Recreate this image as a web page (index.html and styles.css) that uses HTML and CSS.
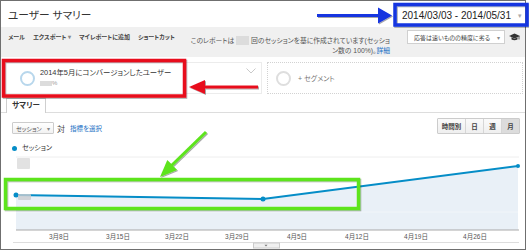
FILE: index.html
```html
<!DOCTYPE html>
<html lang="ja">
<head>
  <meta charset="UTF-8">
  <title>ユーザー サマリー</title>
  <link rel="stylesheet" href="styles.css">
</head>
<body>

  <div class="frame">
    <!-- title + date range -->
    <div class="header">
      <h1 class="title">ユーザー サマリー</h1>
      <div class="daterange"><span>2014/03/03 - 2014/05/31</span><span class="caret">▾</span></div>
    </div>

    <!-- report toolbar -->
    <div class="toolbar">
      <div class="tools">
        <span>メール</span>
        <span>エクスポート <i class="tri">▾</i></span>
        <span>マイレポートに追加</span>
        <span>ショートカット</span>
      </div>
      <p class="note">このレポートは <span class="blur"></span> 回のセッションを基に作成されています(セッショ<br>ン数の 100%)。<a class="link">詳細</a></p>
      <div class="quality"><span>応答は速いものの精度に劣る</span><span class="tri">▾</span></div>
      <svg class="cap" width="11" height="8" viewBox="0 0 11 8">
        <polygon points="0,3 5.5,0.5 11,3 5.5,5.5" fill="#333"/>
        <path d="M2.5 4.2 V6.4 Q5.5 8 8.5 6.4 V4.2 L5.5 5.7 Z" fill="#333"/>
        <line x1="10" y1="3" x2="10" y2="6.5" stroke="#333" stroke-width="0.8"/>
      </svg>
    </div>

    <!-- segments -->
    <div class="segments">
      <div class="seg seg-active">
        <span class="ring"></span>
        <div class="seg-text">
          <div>2014年5月にコンバージョンしたユーザー</div>
          <div class="seg-sub"><span class="blur small"></span>%</div>
        </div>
        <svg class="chev" width="10" height="6" viewBox="0 0 10 6">
          <polyline points="0.5,0.5 5,5 9.5,0.5" fill="none" stroke="#c9c9c9" stroke-width="1"/>
        </svg>
      </div>
      <div class="seg seg-add">
        <span class="ring grey"></span>
        <span class="add-text">+ セグメント</span>
      </div>
    </div>

    <div class="tabs"><span class="tab">サマリー</span></div>

    <div class="controls">
      <div class="picker">
        <div class="select"><span>セッション</span><span class="tri">▾</span></div>
        <span class="versus">対</span>
        <a class="link metric">指標を選択</a>
      </div>
      <div class="periods">
        <span class="wide">時間別</span>
        <span>日</span>
        <span>週</span>
        <span class="on">月</span>
      </div>
    </div>

    <div class="legend"><span class="dot"></span>セッション</div>

    <svg class="chart" width="524" height="94" viewBox="0 0 524 94">
      <line x1="15" y1="2" x2="518" y2="2" stroke="#eeeeee"/>
      <rect x="16" y="3" width="13" height="11" rx="1" fill="#e2e2e2"/>
      <polygon points="15,40 262,44 517,11 517,75 15,75" fill="#e9f0f7"/>
      <line x1="15" y1="57" x2="517" y2="57" stroke="#f1f5f9"/>
      <polyline points="15,40 262,44 517,11" fill="none" stroke="#058dc7" stroke-width="2"/>
      <circle cx="15" cy="40" r="2.5" fill="#058dc7"/>
      <circle cx="262" cy="44" r="2.5" fill="#058dc7"/>
      <circle cx="517" cy="11" r="2" fill="#058dc7"/>
      <rect x="17" y="39" width="13" height="6" rx="1" fill="#c9ccd0" opacity="0.8"/>
      <line x1="15" y1="75" x2="518" y2="75" stroke="#a9a9a9"/>
      <g class="ticks">
        <text x="58" y="84">3月8日</text>
        <text x="117" y="84">3月15日</text>
        <text x="176" y="84">3月22日</text>
        <text x="236" y="84">3月29日</text>
        <text x="296" y="84">4月5日</text>
        <text x="356" y="84">4月12日</text>
        <text x="415" y="84">4月19日</text>
        <text x="474" y="84">4月26日</text>
      </g>
      <line x1="12" y1="87.5" x2="518" y2="87.5" stroke="#dddddd"/>
      <rect x="252.5" y="88" width="26" height="5" fill="#f0f0f0" stroke="#cccccc"/>
      <polygon points="263.5,89.8 266.5,89.8 265,91.5" fill="#777"/>
    </svg>
  </div>

  <!-- callout annotations drawn over the screenshot -->
  <svg class="marks" width="529" height="251" viewBox="0 0 529 251">
    <defs>
      <filter id="sh" x="-10%" y="-30%" width="120%" height="160%">
        <feDropShadow dx="1" dy="1" stdDeviation="0.7" flood-color="#000" flood-opacity="0.35"/>
      </filter>
    </defs>
    <g filter="url(#sh)">
      <rect x="395" y="4.5" width="132" height="20.5" fill="none" stroke="#1434e0" stroke-width="3.5"/>
      <line x1="317" y1="15.5" x2="380" y2="15.5" stroke="#1434e0" stroke-width="3"/>
      <polygon points="392,15.5 378,7.5 378,23.5" fill="#1434e0"/>
    </g>
    <g filter="url(#sh)">
      <rect x="3.5" y="60.5" width="181" height="35.5" fill="none" stroke="#e8101e" stroke-width="3.5"/>
      <line x1="203" y1="87" x2="258" y2="87" stroke="#e8101e" stroke-width="3"/>
      <polygon points="189,87 205,80 205,94" fill="#e8101e"/>
    </g>
    <g filter="url(#sh)">
      <rect x="5.5" y="179.5" width="353" height="29" fill="none" stroke="#5de41c" stroke-width="3.5"/>
      <line x1="206" y1="132" x2="171" y2="166" stroke="#5de41c" stroke-width="3"/>
      <polygon points="160,177 177.1,170.1 167.3,160.1" fill="#5de41c"/>
    </g>
  </svg>

</body>
</html>
```

FILE: styles.css
```css
* {
  box-sizing: border-box;
  margin: 0;
  padding: 0;
}

body {
  margin: 0;
  width: 529px;
  height: 251px;
  position: relative;
  overflow: hidden;
  background-color: #fff;
  font-family: "Liberation Sans", "Noto Sans CJK JP", sans-serif;
  font-feature-settings: "palt";
  color: #333;
}

.frame {
  width: 526px;
  height: 250px;
  border: 1px solid #6f6f6f;
}

.link {
  color: #1a6fc4;
}

.tri {
  font-style: normal;
  color: #888;
}

.blur {
  display: inline-block;
  width: 13px;
  height: 9px;
  vertical-align: middle;
  background-color: #dcdcdc;
}

/* header */
.header {
  height: 26px;
  display: flex;
  align-items: center;
  justify-content: space-between;
}

.title {
  padding-left: 7px;
  font-size: 10.7px;
  font-weight: normal;
  color: #333;
}

.daterange {
  width: 132px;
  height: 20px;
  margin-top: 3px;
  padding-left: 9px;
  display: flex;
  align-items: center;
  background-color: #fff;
  font-size: 10px;
  color: #222;
}

.daterange .caret {
  margin-left: auto;
  margin-right: 3px;
  font-size: 7px;
  color: #aaa;
}

/* toolbar */
.toolbar {
  height: 30px;
  display: flex;
  align-items: flex-start;
  background-color: #f0f0f0;
}

.tools {
  flex: none;
  width: 175px;
  margin-top: 5px;
  padding-left: 7px;
  display: flex;
  gap: 8px;
  font-size: 6px;
  font-weight: bold;
  line-height: 10px;
  color: #444;
  white-space: nowrap;
  overflow: hidden;
}

.note {
  flex: none;
  width: 207px;
  margin-left: 7px;
  margin-top: 9px;
  font-size: 6.8px;
  line-height: 10px;
  text-align: right;
  white-space: nowrap;
  color: #555;
}

.note .blur {
  margin-top: -2px;
}

.quality {
  flex: none;
  width: 98px;
  height: 14px;
  margin-left: 17px;
  margin-top: 3px;
  padding: 0 4px 0 6px;
  display: flex;
  align-items: center;
  justify-content: space-between;
  border: 1px solid #d0d0d0;
  background-color: #fff;
  font-size: 6px;
  color: #444;
  white-space: nowrap;
}

.cap {
  flex: none;
  margin-left: 4px;
  margin-top: 6px;
}

/* segments */
.segments {
  height: 40px;
  display: flex;
  gap: 5px;
  padding: 5px 1px 3px 2px;
}

.seg {
  height: 32px;
  display: flex;
  align-items: center;
}

.seg-active {
  width: 259px;
  padding-left: 16px;
  border: 1px solid #ececec;
}

.seg-add {
  width: 256px;
  padding-left: 8px;
  border: 1px dotted #d2d2d2;
}

.ring {
  flex: none;
  width: 15px;
  height: 15px;
  border: 2px solid #b8d7ec;
  border-radius: 50%;
}

.ring.grey {
  border-color: #dedede;
}

.seg-text {
  margin-left: 5px;
  font-size: 7.4px;
  line-height: 11px;
  color: #333;
  white-space: nowrap;
}

.seg-sub {
  font-size: 6px;
  color: #999;
}

.blur.small {
  width: 12px;
  height: 5px;
}

.chev {
  align-self: flex-start;
  margin-left: auto;
  margin-top: 5px;
  margin-right: 5px;
}

.add-text {
  margin-left: 7px;
  font-size: 7px;
  color: #777;
}

/* tabs */
.tabs {
  height: 16px;
  padding: 1px 0 0 5px;
  display: flex;
  border-bottom: 1px solid #dddddd;
}

.tab {
  height: 15px;
  padding: 0 5px;
  border: 1px solid #cfcfcf;
  border-bottom: none;
  background-color: #fff;
  font-size: 7.5px;
  font-weight: bold;
  line-height: 14px;
  color: #333;
}

/* controls */
.controls {
  height: 24px;
  padding: 0 5px 0 11px;
  display: flex;
  align-items: flex-start;
  justify-content: space-between;
}

.picker {
  margin-top: 9px;
  display: flex;
  align-items: center;
}

.select {
  width: 42px;
  height: 12px;
  padding: 0 3px;
  display: flex;
  align-items: center;
  justify-content: space-between;
  border: 1px solid #cccccc;
  border-radius: 1px;
  background: linear-gradient(#ffffff, #f2f2f2);
  font-size: 6px;
  color: #555;
}

.versus {
  margin-left: 3px;
  font-size: 8px;
  color: #444;
}

.metric {
  margin-left: 5px;
  font-size: 6.5px;
}

.periods {
  margin-top: 5px;
  display: flex;
  border: 1px solid #cccccc;
  border-radius: 1px;
}

.periods span {
  width: 18px;
  height: 14px;
  display: flex;
  align-items: center;
  justify-content: center;
  border-left: 1px solid #d6d6d6;
  background: linear-gradient(#fafafa, #efefef);
  font-size: 6.5px;
  font-weight: bold;
  color: #444;
}

.periods span.wide {
  width: 27px;
  border-left: none;
}

.periods span.on {
  background: #dcdcdc;
}

/* legend + chart */
.legend {
  height: 18px;
  padding: 6px 0 0 11px;
  display: flex;
  align-items: flex-start;
  font-size: 7px;
  line-height: 10px;
  color: #333;
}

.dot {
  width: 5px;
  height: 5px;
  margin: 2.5px 5px 0 0;
  border-radius: 50%;
  background-color: #058dc7;
}

.chart {
  display: block;
}

.ticks text {
  font-size: 6.5px;
  fill: #555;
  text-anchor: middle;
}

/* annotation layer */
.marks {
  position: absolute;
  left: 0;
  top: 0;
  pointer-events: none;
}
```
